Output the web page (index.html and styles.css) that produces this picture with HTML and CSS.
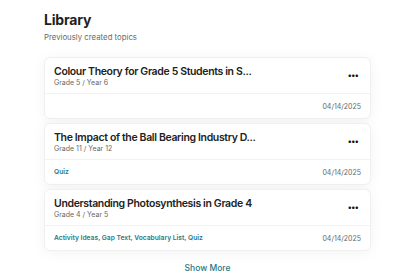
FILE: index.html
```html
<!DOCTYPE html>
<html lang="en">
<head>
    <meta charset="UTF-8">
    <meta name="viewport" content="width=device-width, initial-scale=1.0">
    <title>Library</title>
    <link rel="stylesheet" href="styles.css">
</head>
<body>
    <div class="library">
        <h1>Library</h1>
        <p class="subtitle">Previously created topics</p>

        <div class="topic">
            <div class="topic-head">
                <div>
                    <h3>Colour Theory for Grade 5 Students in S...</h3>
                    <div class="grade">Grade 5 / Year 6</div>
                </div>
                <span class="more">&bull;&bull;&bull;</span>
            </div>
            <div class="topic-foot">
                <span class="tags"></span>
                <span class="date">04/14/2025</span>
            </div>
        </div>

        <div class="topic">
            <div class="topic-head">
                <div>
                    <h3>The Impact of the Ball Bearing Industry D...</h3>
                    <div class="grade">Grade 11 / Year 12</div>
                </div>
                <span class="more">&bull;&bull;&bull;</span>
            </div>
            <div class="topic-foot">
                <span class="tags">Quiz</span>
                <span class="date">04/14/2025</span>
            </div>
        </div>

        <div class="topic">
            <div class="topic-head">
                <div>
                    <h3>Understanding Photosynthesis in Grade 4</h3>
                    <div class="grade">Grade 4 / Year 5</div>
                </div>
                <span class="more">&bull;&bull;&bull;</span>
            </div>
            <div class="topic-foot">
                <span class="tags">Activity Ideas, Gap Text, Vocabulary List, Quiz</span>
                <span class="date">04/14/2025</span>
            </div>
        </div>

        <div class="show-more">Show More</div>
    </div>
</body>
</html>
```

FILE: styles.css
```css
body { margin: 0; background: #fff; font-family: Inter, "Noto Sans", sans-serif; color: #1f1f1f; }
.library { width: 327px; padding: 11px 0 0 44px; }
h1 { font-size: 14px; font-weight: 700; margin: 0; line-height: 18px; letter-spacing: -0.2px; }
.subtitle { font-size: 7.8px; color: #6b6b6b; margin: 3px 0 0; line-height: 10px; }
.topic { box-sizing: border-box; height: 62px; background: #fff; border-radius: 6px; box-shadow: 0 2px 14px rgba(0,0,0,0.05); border: 1px solid #f0f0f0; margin-top: 4px; }
.topic:first-of-type { margin-top: 15px; }
.topic-head { box-sizing: border-box; height: 36px; display: flex; justify-content: space-between; align-items: center; padding: 1px 10px 0 9px; border-bottom: 1px solid #f2f2f2; }
.topic h3 { font-size: 10.5px; font-weight: 600; margin: 0; line-height: 12px; color: #222; letter-spacing: -0.35px; }
.grade { font-size: 7px; color: #666; line-height: 9px; }
.more { font-size: 8px; letter-spacing: -1px; color: #111; padding-right: 2px; margin-top: -2px; }
.topic-foot { display: flex; justify-content: space-between; align-items: center; padding: 0 9px; height: 24px; font-size: 7px; }
.tags { color: #2a7884; font-weight: 600; font-size: 6.7px; }
.date { color: #666; }
.show-more { text-align: center; color: #2a7884; font-size: 8.5px; font-weight: 500; margin-top: 12px; }
```
